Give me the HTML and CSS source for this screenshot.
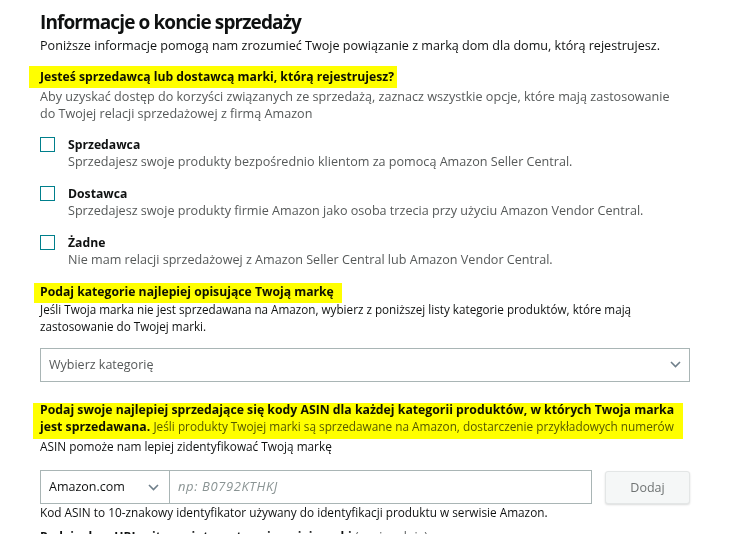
FILE: index.html
```html
<!DOCTYPE html>
<html lang="pl">
<head>
<meta charset="utf-8">
<title>Informacje o koncie sprzedaży</title>
<link rel="stylesheet" href="styles.css">
</head>
<body>
<main class="page">
  <h1 class="title">Informacje o koncie sprzedaży</h1>
  <p class="lead">Poniższe informacje pomogą nam zrozumieć Twoje powiązanie z marką dom dla domu, którą rejestrujesz.</p>

  <section class="block">
    <div class="hl hl-1">
      <h2 class="q">Jesteś sprzedawcą lub dostawcą marki, którą rejestrujesz?</h2>
      <span class="marker marker-1"></span>
    </div>
    <p class="muted">Aby uzyskać dostęp do korzyści związanych ze sprzedażą, zaznacz wszystkie opcje, które mają zastosowanie<br>do Twojej relacji sprzedażowej z firmą Amazon</p>

    <ul class="options">
      <li class="option">
        <span class="box"></span>
        <div class="option-text">
          <strong class="option-label">Sprzedawca</strong>
          <span class="muted">Sprzedajesz swoje produkty bezpośrednio klientom za pomocą Amazon Seller Central.</span>
        </div>
      </li>
      <li class="option">
        <span class="box"></span>
        <div class="option-text">
          <strong class="option-label">Dostawca</strong>
          <span class="muted">Sprzedajesz swoje produkty firmie Amazon jako osoba trzecia przy użyciu Amazon Vendor Central.</span>
        </div>
      </li>
      <li class="option">
        <span class="box"></span>
        <div class="option-text">
          <strong class="option-label">Żadne</strong>
          <span class="muted">Nie mam relacji sprzedażowej z Amazon Seller Central lub Amazon Vendor Central.</span>
        </div>
      </li>
    </ul>
  </section>

  <section class="block block-cat">
    <div class="hl hl-2">
      <h2 class="q">Podaj kategorie najlepiej opisujące Twoją markę</h2>
      <span class="marker marker-2"></span>
    </div>
    <p class="body">Jeśli Twoja marka nie jest sprzedawana na Amazon, wybierz z poniższej listy kategorie produktów, które mają<br>zastosowanie do Twojej marki.</p>
    <div class="select select-cat">
      <span class="placeholder-dark">Wybierz kategorię</span>
      <svg class="chev" width="11" height="7" viewBox="0 0 11 7"><path d="M1 1l4.5 4.5L10 1" fill="none" stroke="#6f7f8a" stroke-width="1.6"/></svg>
    </div>
  </section>

  <section class="block block-asin">
    <div class="hl hl-3">
      <p class="q3"><strong>Podaj swoje najlepiej sprzedające się kody ASIN dla każdej kategorii produktów, w których Twoja marka</strong><br><strong>jest sprzedawana.</strong> <span class="muted small">Jeśli produkty Twojej marki są sprzedawane na Amazon, dostarczenie przykładowych numerów</span></p>
      <span class="marker marker-3"></span>
    </div>
    <p class="body small asin-help">ASIN pomoże nam lepiej zidentyfikować Twoją markę</p>
    <div class="asin-row">
      <div class="asin-field">
        <div class="market">
          <span>Amazon.com</span>
          <svg class="chev" width="11" height="7" viewBox="0 0 11 7"><path d="M1 1l4.5 4.5L10 1" fill="none" stroke="#6f7f8a" stroke-width="1.6"/></svg>
        </div>
        <div class="asin-input">np: B0792KTHKJ</div>
      </div>
      <button class="btn" type="button">Dodaj</button>
    </div>
    <p class="body small">Kod ASIN to 10-znakowy identyfikator używany do identyfikacji produktu w serwisie Amazon.</p>
    <p class="next"><strong>Podaj adres URL witryny internetowej swojej marki</strong> <span class="muted">(opcjonalnie)</span></p>
  </section>
</main>
</body>
</html>
```

FILE: styles.css
```css
* { box-sizing: border-box; }
html, body { margin: 0; padding: 0; background: #fff; }
body {
  font-family: "Open Sans", "Noto Sans", "Liberation Sans", sans-serif;
  font-size: 12.6px;
  line-height: 17.5px;
  color: #0f1111;
  overflow: hidden;
  height: 534px;
}
.page {
  width: 741px;
  padding: 10px 51px 0 40px;
}
.title {
  margin: 0;
  font-size: 19px;
  line-height: 24px;
  font-weight: 700;
  letter-spacing: -0.9px;
  color: #0f1111;
}
.lead { margin: 3px 0 0; line-height: 17px; }
.block { margin: 0; }
.hl { position: relative; }
.hl-1, .hl-2 { display: inline-block; }
.hl-1 { margin-top: 14px; }
.q {
  margin: 0;
  font-size: 12.2px;
  line-height: 17px;
  font-weight: 700;
  color: #0f1111;
}
.marker {
  position: absolute;
  background: #ffff00;
  mix-blend-mode: multiply;
  pointer-events: none;
}
.marker-1 { left: -11px; right: -3px; top: -2px; height: 22px; }
.marker-2 { left: -6px; right: -8px; top: 0; height: 20px; }
.marker-3 { left: -7px; right: 7px; top: 1px; height: 36px; }
.hl-1 + .muted { margin-top: 2px; }
p { margin: 0; }
.muted { color: #565959; }
.body { color: #0f1111; font-size: 11.7px; }
.small { font-size: 11.8px; }
.options {
  list-style: none;
  margin: 13px 0 0;
  padding: 0;
  display: flex;
  flex-direction: column;
  gap: 14px;
}
.option { display: flex; align-items: flex-start; gap: 13px; }
.box {
  flex: none;
  width: 15px;
  height: 15px;
  margin-top: 1.5px;
  border: 1.3px solid #007f8c;
  background: #fff;
}
.option-text { display: flex; flex-direction: column; }
.option-label { font-weight: 700; font-size: 12.2px; color: #0f1111; }
.block-cat { margin-top: 14.5px; }
.select {
  display: flex;
  align-items: center;
  justify-content: space-between;
  border: 1px solid #a9b5b5;
  background: #fff;
}
.select-cat {
  margin-top: 12px;
  height: 34px;
  padding: 0 8px 0 8px;
}
.placeholder-dark { color: #565959; font-size: 12.5px; }
.block-asin { margin-top: 20px; }
.q3 { line-height: 16px; color: #0f1111; }
.q3 strong { font-weight: 700; font-size: 12.25px; }
.asin-help { margin-top: 3px; }
.asin-row {
  margin-top: 15px;
  display: flex;
  gap: 13px;
  height: 34px;
}
.asin-field {
  display: flex;
  flex: none;
  width: 552px;
  border: 1px solid #a9b5b5;
}
.market {
  flex: none;
  width: 129px;
  display: flex;
  align-items: center;
  justify-content: space-between;
  padding: 0 10px 0 8px;
  border-right: 1px solid #a9b5b5;
  font-size: 12.5px;
  color: #0f1111;
}
.asin-input {
  flex: 1;
  display: flex;
  align-items: center;
  padding-left: 8px;
  font-style: italic;
  color: #8a9494;
  font-size: 13px;
  letter-spacing: 0.6px;
}
.btn {
  width: 85px;
  height: 33px;
  margin-top: 1px;
  border: 1px solid #e3e6e6;
  border-radius: 3px;
  background: #f5f7f7;
  box-shadow: 0 1px 2px rgba(15, 17, 17, 0.15);
  font-family: inherit;
  font-size: 12.5px;
  color: #6f7373;
}
.next { margin-top: 6px; font-size: 12.2px; }
.next strong { font-weight: 700; }
```
